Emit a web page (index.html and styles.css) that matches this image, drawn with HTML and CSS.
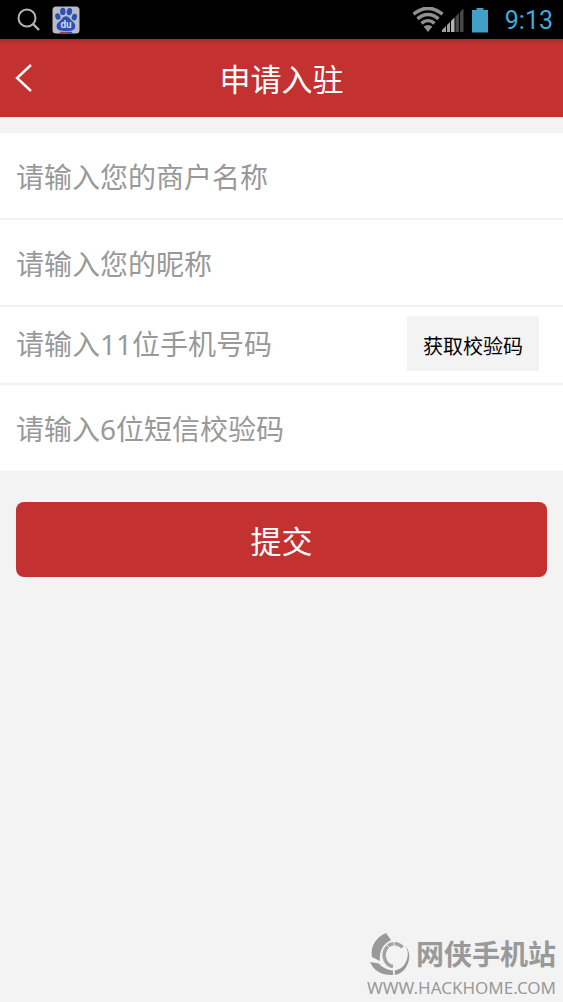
FILE: index.html
```html
<!DOCTYPE html>
<html lang="zh-CN">
<head>
<meta charset="utf-8">
<meta name="viewport" content="width=device-width, initial-scale=1">
<title>申请入驻</title>
<link rel="stylesheet" href="styles.css">
</head>
<body>
<div class="status">
  <svg width="24" height="24" viewBox="0 0 24 24" fill="none" stroke="#b4b4b4" stroke-width="2"><circle cx="10" cy="10" r="8.5"/><path d="M16 16l6 6" stroke-width="2.4"/></svg>
  <svg width="28" height="28" viewBox="0 0 28 28">
    <rect x="0.5" y="0.5" width="27" height="27" rx="3.5" fill="#b9bcc6"/>
    <g fill="#2c50b4"><ellipse cx="5.800" cy="10.5" rx="2.6" ry="3.3" transform="rotate(-12 6 10.5)"/><ellipse cx="10.800" cy="5.400" rx="2.700" ry="3.6"/><ellipse cx="17.4" cy="5.6" rx="2.700" ry="3.6" transform="rotate(10 17.2 5.8)"/><ellipse cx="22.4" cy="11" rx="2.600" ry="3.3" transform="rotate(12 22 11)"/><path d="M14 10.3c3 0 4 3 6 4.800 2.800 2.200 4 4.200 3 6.600-1.200 2.900-4 3.200-9 3.200s-8-.3-9.100-3.200c-1-2.400.2-4.400 3.100-6.600 2-1.800 3-4.800 6-4.800z"/></g>
    <text class="paw-text" x="14" y="22" text-anchor="middle">du</text>
    <path d="M8 26.500h7" stroke="#b43a3a" stroke-width="1.500"/><path d="M15 26.500h5" stroke="#2c50b4" stroke-width="1.500"/>
  </svg>
  <div class="status-right">
    <svg width="52" height="26" viewBox="0 0 52 26">
      <g fill="none" stroke="#909090" stroke-width="3.600"><path d="M.5 7.200C10-.5 20-.5 29.500 7.200"/><path d="M4.500 11.800C11 6 19 6 25.500 11.800"/><path d="M8.500 16.300c4-3.500 9-3.500 13 0"/></g>
      <path d="M10.500 19.500c3-2 6-2 9 0L15 25z" fill="#909090"/>
      <path d="M29 25v-2l4-4v6zM34 25v-7l3-3v10z" fill="#a0a0a0"/><path d="M38 25V14l3.500-3.500V25z" fill="#b4b4b4"/><path d="M42.500 25V9.500L46 6v19zM47 25V5l3.500-3.500V25z" fill="#484848"/>
    </svg>
    <svg width="16" height="26" viewBox="0 0 16 26"><path d="M4.500 1h7v2H16v22.500H0V3h4.500z" fill="#3f9fc6"/></svg>
    <time class="clock">9:13</time>
  </div>
</div>
<header class="header">
  <button class="back" type="button" aria-label="返回"><svg width="18" height="30" viewBox="0 0 18 30" fill="none" stroke="#fff" stroke-width="2.400"><path d="M16 2L2 15l14 13"/></svg></button>
  <h1 class="title">申请入驻</h1>
</header>
<form class="form">
  <div class="fields">
    <div class="row"><input class="field" type="text" aria-label="商户名称" placeholder="请输入您的商户名称"></div>
    <div class="row"><input class="field" type="text" aria-label="昵称" placeholder="请输入您的昵称"></div>
    <div class="row row-code"><input class="field" type="tel" aria-label="手机号码" placeholder="请输入11位手机号码"><button class="code" type="button">获取校验码</button></div>
    <div class="row row-last"><input class="field" type="text" aria-label="短信校验码" placeholder="请输入6位短信校验码"></div>
  </div>
  <button class="submit" type="submit">提交</button>
</form>
<footer class="mark">
  <div class="mark-top">
    <svg width="42" height="44" viewBox="0 0 42 44">
      <path d="M17 1l5 7C14 12 10 19 11 29L3 25C1 15 7 5 17 1z" fill="#999"/>
      <path d="M1 30l9 1.500c3 4 8 6.500 14 7v4.500C13 43.500 5 39 1 30z" fill="#999"/>
      <path d="M25.500 38.500C32 37.500 37 33 38.500 25c1-5-.5-9-3-12 5 5 6 12 3.500 18-2.500 7-7 11-13.500 12z" fill="#999"/>
      <path d="M33.500 15.500A10.500 11.500 0 1 0 24 34.500" fill="none" stroke="#a3a3a3" stroke-width="3.500"/>
      <path d="M25 9v6M25 32v12M17 12l4 4" stroke="#f3f3f3" stroke-width="1"/>
    </svg>
    <span class="mark-name">网侠手机站</span>
  </div>
  <span class="mark-url">WWW.HACKHOME.COM</span>
</footer>
</body>
</html>
```
FILE: styles.css
```css
* {
  box-sizing: border-box;
}

body {
  display: flex;
  flex-direction: column;
  min-height: 100vh;
  margin: 0;
  background: #f3f3f3;
  font-family: "Noto Sans", "Noto Sans CJK SC", sans-serif;
}

button,
input {
  padding: 0;
  border: 0;
  font-family: inherit;
}

svg {
  display: block;
}

.status {
  display: flex;
  align-items: center;
  gap: 11px;
  height: 39px;
  padding: 0 10px 0 17px;
  background: #000;
}

.paw-text {
  fill: #d5d8e2;
  font: bold 10px Roboto, sans-serif;
}

.status-right {
  display: flex;
  align-items: center;
  gap: 7px;
  margin-left: auto;
}

.clock {
  margin-left: 10px;
  padding-top: 2px;
  color: #41acd8;
  font: 25px/37px Roboto, sans-serif;
}

.header {
  display: grid;
  grid-template-columns: 48px 1fr 48px;
  align-items: center;
  height: 78px;
  background: linear-gradient(#a92b2b, #c33131 5px);
}

.back {
  display: flex;
  align-items: center;
  height: 78px;
  padding-left: 15px;
  background: none;
}

.title {
  margin: 0;
  padding-top: 2px;
  color: #fff;
  font-size: 31px;
  font-weight: 400;
  line-height: 40px;
  text-align: center;
}

.form {
  padding-top: 16px;
}

.fields {
  background: #fff;
}

.row {
  display: flex;
  align-items: center;
  height: 87px;
  padding: 2px 24px 0 16px;
  border-bottom: 2px solid #f3f3f3;
}

.row-code {
  height: 78px;
  padding-top: 0;
  padding-bottom: 3px;
}

.row-last {
  height: 86px;
  border-bottom: 0;
}

.field {
  flex: 1;
  min-width: 0;
  height: 56px;
  background: none;
  color: #333;
  font-size: 28px;
  outline: 0;
}

.field::placeholder {
  color: #999;
  opacity: 1;
}

.code {
  height: 55px;
  padding: 4px 16px 0;
  background: #f3f3f3;
  color: #000;
  font-size: 20px;
}

.submit {
  display: block;
  width: calc(100% - 32px);
  height: 75px;
  margin: 31px 16px 0;
  border-radius: 8px;
  background: #c33131;
  color: #fff;
  font-size: 31px;
}

.mark {
  display: flex;
  flex-direction: column;
  align-items: flex-end;
  margin-top: auto;
  padding: 0 7px 2px;
  color: #999;
}

.mark-top {
  display: flex;
  align-items: center;
  gap: 5px;
}

.mark-name {
  font-size: 28px;
  font-weight: 700;
  line-height: 44px;
}

.mark-url {
  font-size: 17px;
  line-height: 24px;
}
```
